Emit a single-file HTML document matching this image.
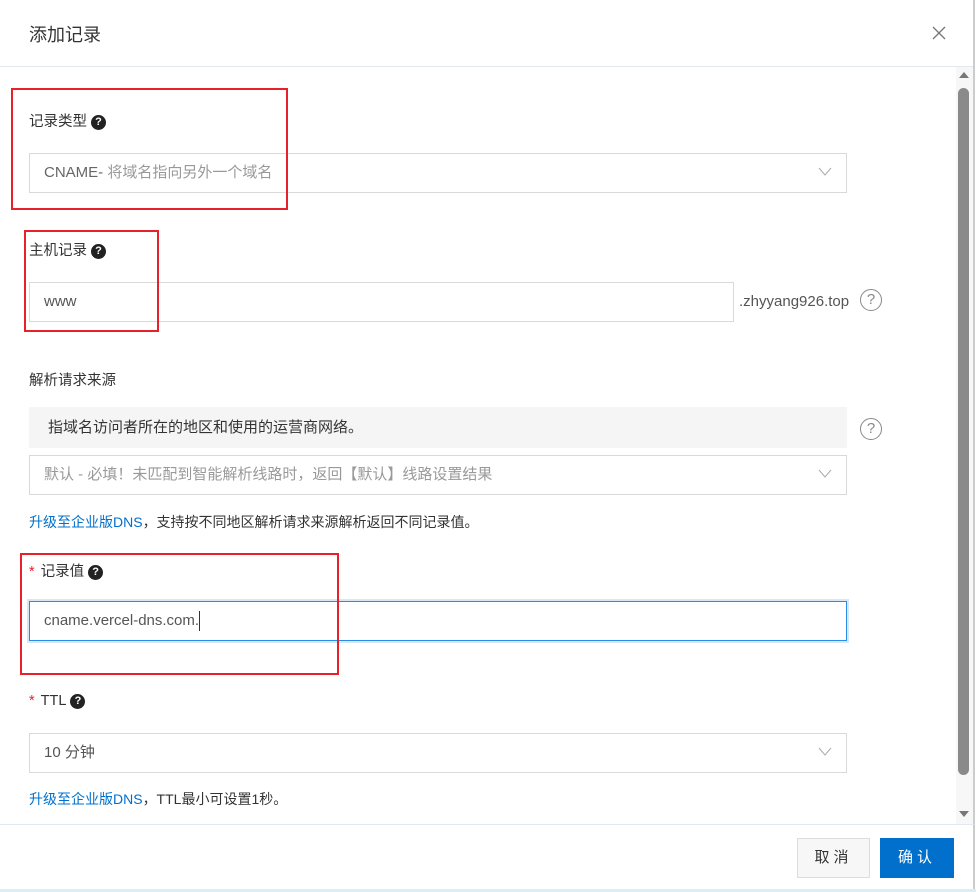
<!DOCTYPE html>
<html><head><meta charset="utf-8"><style>
*{margin:0;padding:0;box-sizing:border-box}
body{width:976px;height:892px;background:#fff;position:relative;overflow:hidden;font-family:"Liberation Sans","Noto Sans CJK SC",sans-serif;color:#333;font-size:14px}
.a{position:absolute}
.red{position:absolute;border:2px solid #e8202a;z-index:5}
.lbl{position:absolute;left:29px;font-size:14.5px;color:#333;line-height:20px}
.q{display:inline-block;width:15px;height:15px;border-radius:50%;background:#222;color:#fff;font-size:11px;line-height:15px;text-align:center;font-weight:bold;vertical-align:1px;margin-left:4px}
.box{position:absolute;left:29px;width:818px;height:40px;border:1px solid #d9d9d9;padding-left:14px;line-height:38px;font-size:15px;color:#999}
.chev{position:absolute;right:14px;top:13px;width:14px;height:9px}
.qo{position:absolute;width:22px;height:22px;border:1.5px solid #888;border-radius:50%;color:#888;text-align:center;font-size:15px;line-height:19px}
.link{position:absolute;left:29px;font-size:14px;color:#333}
.link b{font-weight:normal;color:#0070cc}
.star{color:#e8202a;margin-right:6px}
</style></head><body>
<div class="a" style="left:29px;top:21px;font-size:18px;color:#333">添加记录</div>
<svg class="a" style="left:932px;top:26px" width="14" height="14"><path d="M1 1L13 13M13 1L1 13" stroke="#777" stroke-width="1.3"/></svg>
<div class="a" style="left:0;top:66px;width:974px;height:1px;background:#e3e8ee"></div>

<div class="red" style="left:11px;top:88px;width:277px;height:122px"></div>
<div class="lbl" style="top:112px">记录类型<span class="q">?</span></div>
<div class="box" style="top:153px"><span style="color:#666">CNAME-</span> 将域名指向另外一个域名<svg class="chev" viewBox="0 0 14 9"><path d="M1 1L7 8L13 1" fill="none" stroke="#aaa"/></svg></div>

<div class="red" style="left:24px;top:230px;width:135px;height:102px"></div>
<div class="lbl" style="top:241px">主机记录<span class="q">?</span></div>
<div class="box" style="top:282px;width:705px;color:#555">www</div>
<div class="a" style="left:739px;top:293px;font-size:15px;color:#555">.zhyyang926.top</div>
<div class="qo" style="left:860px;top:289px">?</div>

<div class="lbl" style="top:371px">解析请求来源</div>
<div class="a" style="left:29px;top:407px;width:818px;height:41px;background:#f5f5f5;padding-left:19px;line-height:41px;color:#333;font-size:15px">指域名访问者所在的地区和使用的运营商网络。</div>
<div class="qo" style="left:860px;top:418px">?</div>
<div class="box" style="top:455px">默认 - 必填！未匹配到智能解析线路时，返回【默认】线路设置结果<svg class="chev" viewBox="0 0 14 9"><path d="M1 1L7 8L13 1" fill="none" stroke="#aaa"/></svg></div>
<div class="link" style="top:512px"><b>升级至企业版DNS</b>，支持按不同地区解析请求来源解析返回不同记录值。</div>

<div class="red" style="left:20px;top:553px;width:319px;height:122px"></div>
<div class="lbl" style="top:562px"><span class="star">*</span>记录值<span class="q">?</span></div>
<div class="box" style="top:601px;border-color:#2b8ce6;box-shadow:0 0 0 2px #d6e8f8;color:#555">cname.vercel-dns.com.<span style="display:inline-block;width:1px;height:20px;background:#333;vertical-align:middle"></span></div>

<div class="lbl" style="top:691px"><span class="star">*</span>TTL<span class="q">?</span></div>
<div class="box" style="top:733px;color:#555">10 分钟<svg class="chev" viewBox="0 0 14 9"><path d="M1 1L7 8L13 1" fill="none" stroke="#aaa"/></svg></div>
<div class="link" style="top:789px"><b>升级至企业版DNS</b>，TTL最小可设置1秒。</div>

<div class="a" style="left:956px;top:67px;width:17px;height:757px;background:#f7f7f7"></div>
<svg class="a" style="left:958px;top:71px" width="12" height="8"><path d="M1 7L6 1L11 7Z" fill="#777"/></svg>
<div class="a" style="left:958px;top:88px;width:11px;height:687px;background:#8a8a8a;border-radius:6px"></div>
<svg class="a" style="left:958px;top:810px" width="12" height="8"><path d="M1 1L6 7L11 1Z" fill="#777"/></svg>
<div class="a" style="left:973px;top:0;width:2px;height:890px;background:#ccc"></div>

<div class="a" style="left:0;top:824px;width:974px;height:1px;background:#e3e8ee"></div>
<div class="a" style="left:797px;top:838px;width:73px;height:40px;background:#f7f7f7;border:1px solid #ddd;text-align:center;line-height:38px;color:#333;letter-spacing:4px;font-size:15px">取消</div>
<div class="a" style="left:880px;top:838px;width:74px;height:40px;background:#0070cc;text-align:center;line-height:40px;color:#fff;letter-spacing:4px;font-size:15px">确认</div>
<div class="a" style="left:0;top:889px;width:976px;height:3px;background:#d8eef8"></div>
</body></html>
